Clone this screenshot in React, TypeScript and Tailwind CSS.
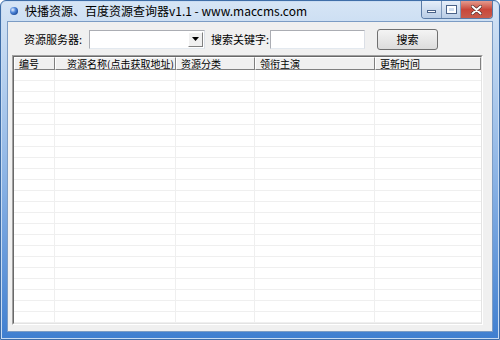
import React from 'react';

const cols = [
  { title: '编号', w: 'w-[41px]' },
  { title: '资源名称(点击获取地址)', w: 'w-[121px]', pad: 'pl-[11px]' },
  { title: '资源分类', w: 'w-[79px]' },
  { title: '领衔主演', w: 'w-[120px]' },
  { title: '更新时间', w: 'flex-1' },
];

const rows = Array.from({ length: 23 });

function AppIcon() {
  return (
    <svg width="10" height="10" viewBox="0 0 10 10">
      <defs>
        <radialGradient id="g" cx="0.35" cy="0.35" r="0.7">
          <stop offset="0" stopColor="#e8f1ff" />
          <stop offset="0.5" stopColor="#4f86d8" />
          <stop offset="1" stopColor="#1d4c9c" />
        </radialGradient>
      </defs>
      <circle cx="5" cy="5" r="4" fill="url(#g)" />
    </svg>
  );
}

function TitleButtons() {
  return (
    <div className="flex h-[18px] rounded-b-[4px] border border-t-0 border-[#5a7aa5] overflow-hidden">
      <div className="w-[20px] flex items-center justify-center bg-gradient-to-b from-[#e6eef9] to-[#b9cde6] border-r border-[#7e98bb]">
        <div className="w-[9px] h-[3px] bg-white border border-[#4a6288] mt-[3px]" />
      </div>
      <div className="w-[19px] flex items-center justify-center bg-gradient-to-b from-[#e6eef9] to-[#b9cde6] border-r border-[#7e98bb]">
        <div className="w-[9px] h-[7px] border-[2px] border-white outline outline-1 outline-[#4a6288]" />
      </div>
      <div className="w-[31px] flex items-center justify-center bg-gradient-to-b from-[#e39a8e] via-[#c9473a] to-[#c75c4c]">
        <svg width="11" height="10" viewBox="0 0 11 10">
          <path d="M1.5 1.5 L9.5 8.5 M9.5 1.5 L1.5 8.5" stroke="#4a2a2a" strokeWidth="3.2" strokeLinecap="round" />
          <path d="M1.5 1.5 L9.5 8.5 M9.5 1.5 L1.5 8.5" stroke="#ffffff" strokeWidth="2" strokeLinecap="round" />
        </svg>
      </div>
    </div>
  );
}

export default function App() {
  return (
    <div
      className="w-[500px] h-[340px] overflow-hidden bg-white"
      style={{ fontFamily: '"Noto Sans CJK SC", "Liberation Sans", sans-serif' }}
    >
      <div className="w-[500px] h-[340px] flex flex-col rounded-t-[6px] border border-[#3f6ea8] bg-gradient-to-b from-[#d6e5f5] via-[#8fb6e6] to-[#3f7fd0] shadow-[inset_0_0_0_1px_#c9dcf2]">
        {/* 标题栏 */}
        <div className="h-[20px] flex items-start shrink-0">
          <div className="flex items-center h-[20px] pl-[8px] gap-[6px]">
            <AppIcon />
            <span className="text-[12px] leading-none text-black">快播资源、百度资源查询器v1.1 - www.maccms.com</span>
          </div>
          <div className="ml-auto mr-[6px]">
            <TitleButtons />
          </div>
        </div>

        {/* 客户区 */}
        <div className="flex-1 mx-[6px] mb-[7px] border border-[#7c9cc4] bg-[#f0f0f0] flex flex-col text-[11px] text-black">
          <div className="flex items-center h-[26px] mt-[4px] pl-[16px] shrink-0">
            <span className="w-[65px] leading-none whitespace-nowrap">资源服务器:</span>
            <div className="w-[116px] h-[19px] flex border border-t-[#abadb3] border-l-[#abadb3] border-r-[#dbdfe6] border-b-[#e3e9ef] bg-white">
              <div className="flex-1" />
              <div className="w-[15px] m-[1px] flex items-center justify-center bg-[#f0f0f0] border border-t-white border-l-white border-r-[#808080] border-b-[#808080]">
                <svg width="7" height="4" viewBox="0 0 7 4">
                  <path d="M0 0 H7 L3.5 4 Z" fill="#000" />
                </svg>
              </div>
            </div>
            <span className="ml-[6px] w-[59px] leading-none whitespace-nowrap">搜索关键字:</span>
            <div className="w-[95px] h-[19px] border border-t-[#abadb3] border-l-[#abadb3] border-r-[#dbdfe6] border-b-[#e3e9ef] bg-white" />
            <div className="ml-[12px] w-[61px] h-[21px] flex items-center justify-center rounded-[3px] border border-[#707070] bg-gradient-to-b from-[#f4f4f4] to-[#dcdcdc] leading-none">
              搜索
            </div>
          </div>

          {/* 列表 */}
          <div className="flex-1 mx-[4px] mt-[3px] mb-[6px] mr-[9px] border border-t-[#a0a0a0] border-l-[#a0a0a0] border-r-white border-b-white">
            <div className="h-full border border-t-[#696969] border-l-[#696969] border-r-[#e3e3e3] border-b-[#e3e3e3] bg-white flex flex-col overflow-hidden">
              <div className="flex h-[13px] shrink-0 bg-[#f0f0f0]">
                {cols.map((c, i) => (
                  <div
                    key={i}
                    className={`${c.w} ${c.pad ?? 'pl-[4px]'} h-[13px] border border-t-white border-l-white border-r-[#808080] border-b-[#808080] text-[10px] leading-[11px] whitespace-nowrap overflow-hidden`}
                  >
                    {c.title}
                  </div>
                ))}
              </div>
              <div className="flex-1 flex flex-col">
                {rows.map((_, r) => (
                  <div key={r} className="flex h-[11px] shrink-0 border-b border-[#efefef]">
                    {cols.map((c, i) => (
                      <div key={i} className={`${c.w} h-full ${i < cols.length - 1 ? 'border-r border-[#efefef]' : ''}`} />
                    ))}
                  </div>
                ))}
              </div>
            </div>
          </div>
        </div>
      </div>
    </div>
  );
}
